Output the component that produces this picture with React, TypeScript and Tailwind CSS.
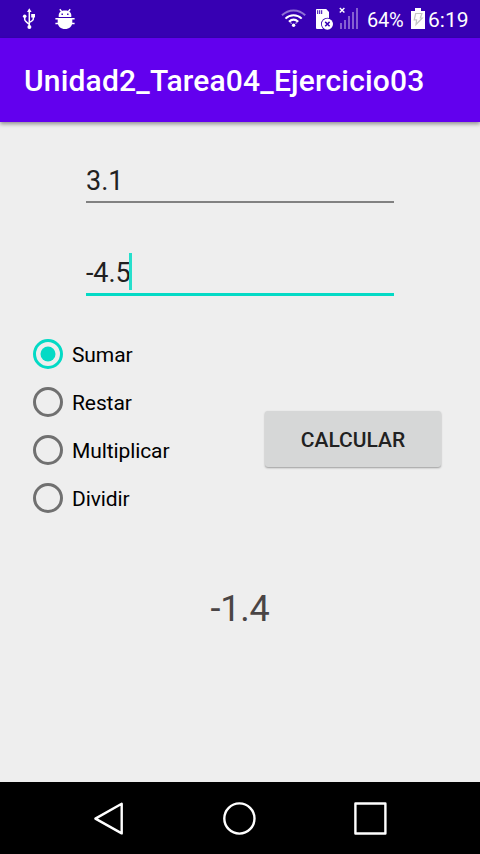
import { useState } from "react";

function UsbIcon() {
  return (
    <svg className="ml-[22px] h-[38px] w-[15px]" viewBox="22 0 15 38" fill="none" stroke="#fff" strokeWidth="1.5">
      <path d="M29.3 11v16M24.7 17v2.5c0 1.2.6 1.8 4.6 5M33.3 16v3c0 1.2-.6 1.8-4 3.4" />
      <path d="M29.3 8.3l2.3 3.7h-4.6z" fill="#fff" stroke="none" />
      <circle cx="24.7" cy="16.3" r="1.8" fill="#fff" stroke="none" />
      <path d="M31.2 14h3.8v3.5h-3.8z" fill="#fff" stroke="none" />
      <circle cx="29.4" cy="27" r="2" fill="#fff" stroke="none" />
    </svg>
  );
}

function AndroidIcon() {
  return (
    <svg className="ml-[18px] h-[38px] w-5" viewBox="55 0 20 38">
      <path d="M59.8 9.3l2 2.5M70.2 9.3l-2 2.5M55.4 18.7h4M70.6 18.7h4M55.4 23.5h4M70.6 23.5h4" stroke="#fff" strokeWidth="1.4" />
      <path d="M58.7 17v-1.8c0-2.7 2.6-4.7 6.3-4.7s6.3 2 6.3 4.7V17z" fill="#fff" />
      <path d="M57.7 18h14.6v4.2c0 4-3.2 6.8-7.3 6.8s-7.3-2.8-7.3-6.8z" fill="#fff" />
      <path d="M61.5 13.5h1.4V15h-1.4zM67.1 13.5h1.4V15h-1.4z" fill="#3700b3" />
    </svg>
  );
}

function WifiIcon() {
  return (
    <svg className="ml-auto h-[38px] w-[26px]" viewBox="281 0 26 38" fill="none">
      <path d="M282 15.3c6.6-6.5 16.6-6.5 23.2 0" stroke="#8f70d5" strokeWidth="2" />
      <path d="M285.5 18.6c4.6-4.5 11.6-4.5 16.2 0" stroke="#fff" strokeWidth="2" />
      <path d="M289 21.7c2.8-2.6 6.4-2.6 9.2 0" stroke="#fff" strokeWidth="2.2" />
      <path d="M290.2 22.6l1.6.9M297 22.6l-1.6.9" stroke="#b9a5e5" strokeWidth="1.2" />
      <circle cx="293.6" cy="25.3" r="1.7" fill="#fff" />
    </svg>
  );
}

function SimIcon() {
  return (
    <svg className="ml-2 h-[38px] w-[18px]" viewBox="315 0 18 38">
      <path d="M317 9h9.2l2.8 3v17h-11.8c-.8 0-1.2-.4-1.2-1.2V10c0-.6.4-1 1-1z" fill="#fff" />
      <path d="M317.7 10.2v3.8M319.7 10.2v3.8M321.7 10.2v3.8" stroke="#3700b3" strokeWidth="1" />
      <circle cx="327.4" cy="24.1" r="6.4" fill="#3700b3" />
      <circle cx="327.4" cy="24.1" r="5.6" fill="#fff" />
      <path d="M325.2 21.9l4.4 4.4M329.6 21.9l-4.4 4.4" stroke="#3700b3" strokeWidth="1.5" />
    </svg>
  );
}

function SignalIcon() {
  return (
    <svg className="ml-1.5 h-[38px] w-5" viewBox="339 0 20 38" fill="none">
      <path d="M339.8 8l4.6 4.6M344.4 8l-4.6 4.6" stroke="#fff" strokeWidth="1.4" />
      <path d="M341 23v6M345 20v9M349 16v13M353 12v17M357 8v21" stroke="#8560d1" strokeWidth="2" />
    </svg>
  );
}

function BatteryIcon() {
  return (
    <svg className="h-[38px] w-[14px]" viewBox="411 0 14 38">
      <path d="M411 11h4V8h6v3h4V29h-14z" fill="#fff" />
      <path d="M415.7 13.5h6.2l-1.6 4.5h2l-6.3 6.5.6-4.7h-2.4z" fill="none" stroke="#c5c5c5" strokeWidth="1.2" />
    </svg>
  );
}

const operations = ["Sumar", "Restar", "Multiplicar", "Dividir"];

export default function App() {
  const [selected, setSelected] = useState("Sumar");
  return (
    <div className="flex h-[854px] w-[480px] flex-col overflow-hidden bg-[#eeeeee] font-[Roboto,sans-serif]">
      <div className="flex h-[38px] shrink-0 items-center bg-[#3700b3] text-white">
        <UsbIcon />
        <AndroidIcon />
        <WifiIcon />
        <SimIcon />
        <SignalIcon />
        <span className="ml-2 w-11 pt-0.5 text-[20px] leading-none tracking-[-0.2px]">64%</span>
        <BatteryIcon />
        <span className="ml-[3px] w-[52px] pt-[3px] text-[21px] leading-none">6:19</span>
      </div>
      <header className="z-10 flex h-[84px] shrink-0 items-center bg-[#6200ee] px-6 pt-0.5 shadow-[0_2px_4px_rgba(0,0,0,0.4)]">
        <h1 className="text-[30px] leading-none font-medium tracking-[0.18px] text-white">Unidad2_Tarea04_Ejercicio03</h1>
      </header>
      <main className="flex h-[660px] shrink-0 flex-col">
        <div className="mx-[86px] mt-[38px] h-[43px] border-b-2 border-[#818181] text-[27px] leading-[42px] text-[#212121]">
          3.1
        </div>
        <div className="mx-[86px] mt-[50px] flex h-[43px] border-b-3 border-[#03dac5] text-[27px] leading-[40px] text-[#212121]">
          <span className="tracking-[-0.1px]">-4.5</span>
          <span className="-ml-[1.5px] h-[37px] w-[3px] bg-[#26dfcc]" />
        </div>
        <div className="mt-[34px] flex h-48">
          <div className="ml-[33px] flex w-[232px] flex-col">
            {operations.map((name) => (
              <button key={name} className="flex h-12 items-center" onClick={() => setSelected(name)}>
                <svg className="h-[30px] w-[30px]" viewBox="0 0 30 30">
                  <circle cx="15" cy="15" r="13.5" fill="none" stroke={selected === name ? "#03dac5" : "#707070"} strokeWidth="3" />
                  {selected === name && <circle cx="15" cy="15" r="7.5" fill="#03dac5" />}
                </svg>
                <span className="ml-[9px] pt-0.5 text-[21px] leading-6 tracking-[-0.1px] text-black">{name}</span>
              </button>
            ))}
          </div>
          <button className="mt-[81px] h-14 w-[176px] rounded-[3px] bg-[#d6d7d7] pt-[3px] text-[21px] font-medium text-[#212121] shadow-[0_1px_2px_rgba(0,0,0,0.35)]">
            CALCULAR
          </button>
        </div>
        <div className="mt-[66px] text-center text-[36px] leading-[42px] tracking-[-0.2px] text-[#4a4545]">-1.4</div>
      </main>
      <nav className="flex h-[72px] shrink-0 items-center bg-black pl-[93px]">
        <svg className="h-9 w-[31px]" viewBox="0 0 31 36" fill="none" stroke="#fff" strokeWidth="2.4" strokeLinejoin="round">
          <path d="M2.4 18.6L28.7 3.8v29.6z" />
        </svg>
        <svg className="ml-[98px] h-9 w-[34px]" viewBox="222 0 34 36" fill="none" stroke="#fff" strokeWidth="2.4">
          <circle cx="239.4" cy="18.5" r="15.1" />
        </svg>
        <svg className="ml-[97px] h-9 w-[35px]" viewBox="353 0 35 36" fill="none" stroke="#fff" strokeWidth="2.4" strokeLinejoin="round">
          <path d="M355.4 3.5h30v30h-30z" />
        </svg>
      </nav>
    </div>
  );
}
